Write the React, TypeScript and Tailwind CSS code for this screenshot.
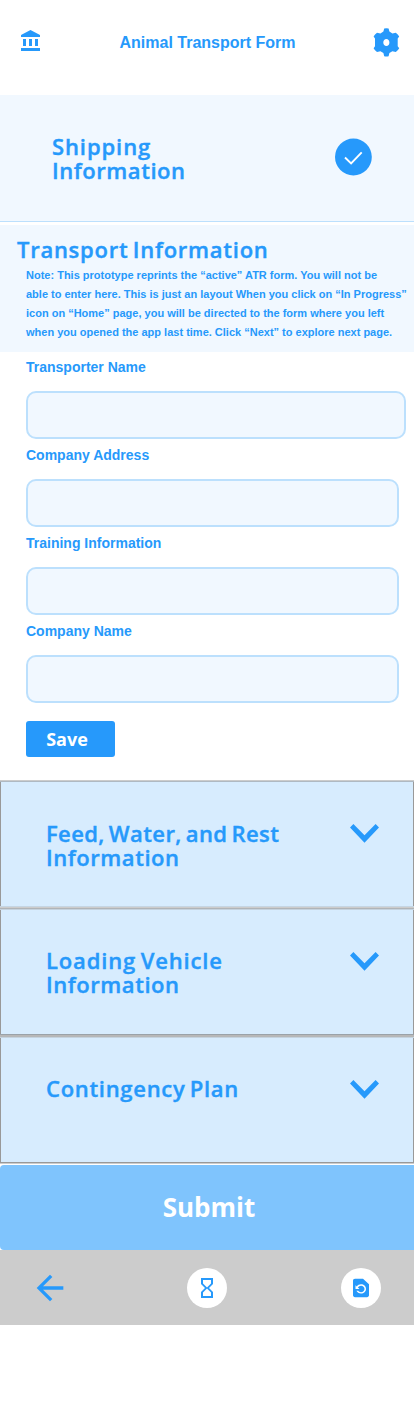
import React from "react";
import { MdArrowBack, MdHourglassEmpty, MdRestorePage } from "react-icons/md";

function BankIcon() {
  return (
    <svg width="19" height="21" viewBox="0 0 19 21" fill="#2699fb" aria-hidden="true">
      <path d="M9.5 0 19 5V7H0V5ZM2 9H5V16H2ZM8 9H11V16H8ZM14 9H17V16H14ZM0 18H19V21H0Z" />
    </svg>
  );
}

function GearIcon() {
  return (
    <svg width="27" height="29" viewBox="0 0 27 29" fill="#2699fb" aria-hidden="true">
      <path
        fillRule="evenodd"
        d="M11.2 .6Q13.4 -.1 15.6 .6L16.4 3.5L19.4 5.4L22.8 4.7Q25 6.2 26.2 8.6L24.7 10.6V18.2L26.2 20.2Q25 22.6 22.8 23.9L19.4 23.2L16.4 25.1L15.6 28.2Q13.4 28.9 11.2 28.2L10.4 25.1L7.4 23.2L4 23.9Q1.8 22.6 .6 20.2L2 18.2V10.6L.6 8.6Q1.8 6.2 4 4.7L7.4 5.4L10.4 3.5ZM13.4 11C11.6 11 10.3 12.5 10.3 14.5S11.6 18 13.4 18S16.4 16.5 16.4 14.5S15.1 11 13.4 11Z"
      />
    </svg>
  );
}

function Chevron() {
  return (
    <svg width="29" height="19" viewBox="0 0 29 19" fill="#2699fb" aria-hidden="true">
      <path d="M3.4 0 14.5 11.3 25.6 0 29 3.6 14.5 18.7 0 3.6Z" />
    </svg>
  );
}

function Rules({ colors }: { colors: string[] }) {
  return (
    <div className="shrink-0">
      {colors.map((c, i) => (
        <div key={i} className={`h-px ${c}`} />
      ))}
    </div>
  );
}

const heading = "font-['Open_Sans',sans-serif] font-semibold text-[22px] leading-[24px] text-[#2699fb] [word-spacing:-2px] [-webkit-text-stroke:0.4px_#2699fb]";

type Line = { text: string; cls: string };

const sections: { lines: Line[]; box: string; icon: string; below: string[] }[] = [
  {
    lines: [
      { text: "Feed, Water, and Rest", cls: "tracking-[0.4px]" },
      { text: "Information", cls: "tracking-[0.55px]" },
    ],
    box: "h-[124px] pt-[39px]",
    icon: "mt-[3px]",
    below: ["bg-[#c5d5e3]", "bg-[#cccccc]", "bg-[#b0b4b8]", "bg-[#c5d3df]"],
  },
  {
    lines: [
      { text: "Loading Vehicle", cls: "tracking-[0.85px]" },
      { text: "Information", cls: "tracking-[0.55px]" },
    ],
    box: "h-[124px] pt-[38px]",
    icon: "mt-[4px]",
    below: ["bg-[#9aa2a9]", "bg-[#b8b8b8]", "bg-[#b5b7b9]", "bg-[#c5d3df]"],
  },
  {
    lines: [{ text: "Contingency Plan", cls: "tracking-[0.7px]" }],
    box: "h-[124px] pt-[38px]",
    icon: "mt-[4px]",
    below: ["bg-[#999999]", "bg-[#cccccc]"],
  },
];

const fields = [
  { label: "Transporter Name", cls: "w-[380px]" },
  { label: "Company Address", cls: "w-[373px]" },
  { label: "Training Information", cls: "w-[373px]" },
  { label: "Company Name", cls: "w-[373px]" },
];

const noteLines = [
  "Note: This prototype reprints the “active” ATR form. You will not be",
  "able to enter here. This is just an layout When you click on “In Progress”",
  "icon on “Home” page, you will be directed to the form where you left",
  "when you opened the app last time. Click “Next” to explore next page.",
];

export default function App() {
  return (
    <div className="flex h-[1402px] w-[414px] flex-col overflow-hidden bg-white font-['Liberation_Sans',sans-serif] font-bold text-[#2699fb]">
      <header className="flex h-[95px] shrink-0 items-start justify-between pl-[21px] pr-[14px]">
        <div className="mt-[30px]"><BankIcon /></div>
        <h1 className="mt-[33px] pl-[2px] text-[16px] leading-[20px]">Animal Transport Form</h1>
        <div className="mt-[28px]"><GearIcon /></div>
      </header>

      <section className="mb-[3px] flex h-[127px] shrink-0 items-start justify-between border-b border-[#bce0fd] bg-[#f1f8ff] pl-[52px] pr-[42px]">
        <h2 className={`${heading} mt-[39px]`}>
          <span className="block tracking-[0.9px]">Shipping</span>
          <span className="block tracking-[0.55px]">Information</span>
        </h2>
        <svg width="37" height="38" viewBox="0 0 37 38" className="mt-[43px]" aria-hidden="true">
          <circle cx="18.4" cy="19" r="18.4" fill="#2699fb" />
          <path d="M10 19.5 16.1 25.5 26.7 14.3" fill="none" stroke="#fff" strokeWidth="1.9" />
        </svg>
      </section>

      <section className="h-[127px] shrink-0 bg-[#f1f8ff]">
        <h2 className={`${heading} ml-[17px] pt-[12px] whitespace-nowrap tracking-[0.74px]`}>Transport Information</h2>
        <div className="ml-[26px] mt-[5px] text-[11px] leading-[19px] whitespace-nowrap">
          {noteLines.map((l) => (
            <p key={l}>{l}</p>
          ))}
        </div>
      </section>

      <form className="flex h-[428px] shrink-0 flex-col pl-[26px]">
        {fields.map((f) => (
          <label key={f.label} className="flex h-[88px] shrink-0 flex-col">
            <span className="mt-[5px] h-[34px] text-[14px] leading-[20px]">{f.label}</span>
            <input className={`${f.cls} h-[48px] rounded-[10px] border-2 border-[#bce0fd] bg-[#f1f8ff] px-3 outline-none`} />
          </label>
        ))}
        <button
          type="button"
          className="mt-[17px] h-[36px] w-[89px] rounded-[3px] bg-[#2699fb] pr-[7px] font-['Open_Sans',sans-serif] text-[18px] font-bold leading-[36px] text-white"
        >
          Save
        </button>
      </form>

      <Rules colors={["bg-[#cccccc]", "bg-[#afb9c2]"]} />
      {sections.map((s) => (
        <React.Fragment key={s.lines[0].text}>
          <section
            className={`flex shrink-0 items-start justify-between border-x border-[#999999] bg-[#d7ecfe] pl-[45px] pr-[34px] ${s.box}`}
          >
            <h2 className={heading}>
              {s.lines.map((l) => (
                <span key={l.text} className={`block whitespace-nowrap ${l.cls}`}>{l.text}</span>
              ))}
            </h2>
            <div className={s.icon}><Chevron /></div>
          </section>
          <Rules colors={s.below} />
        </React.Fragment>
      ))}

      <button
        type="button"
        className="mt-px h-[85px] shrink-0 rounded-l-[4px] bg-[#7fc4fd] pl-[4px] font-['Open_Sans',sans-serif] text-[26px] font-bold leading-[85px] text-white"
      >
        Submit
      </button>

      <nav className="flex h-[75px] shrink-0 items-center justify-between bg-[#ccc] pl-[30px] pr-[33px]">
        <MdArrowBack size={40} />
        <span className="ml-[2px] flex size-[40px] items-center justify-center rounded-full bg-white">
          <MdHourglassEmpty size={24} />
        </span>
        <span className="flex size-[40px] items-center justify-center rounded-full bg-white">
          <MdRestorePage preserveAspectRatio="none" className="h-[22px] w-[24px]" />
        </span>
      </nav>
    </div>
  );
}
